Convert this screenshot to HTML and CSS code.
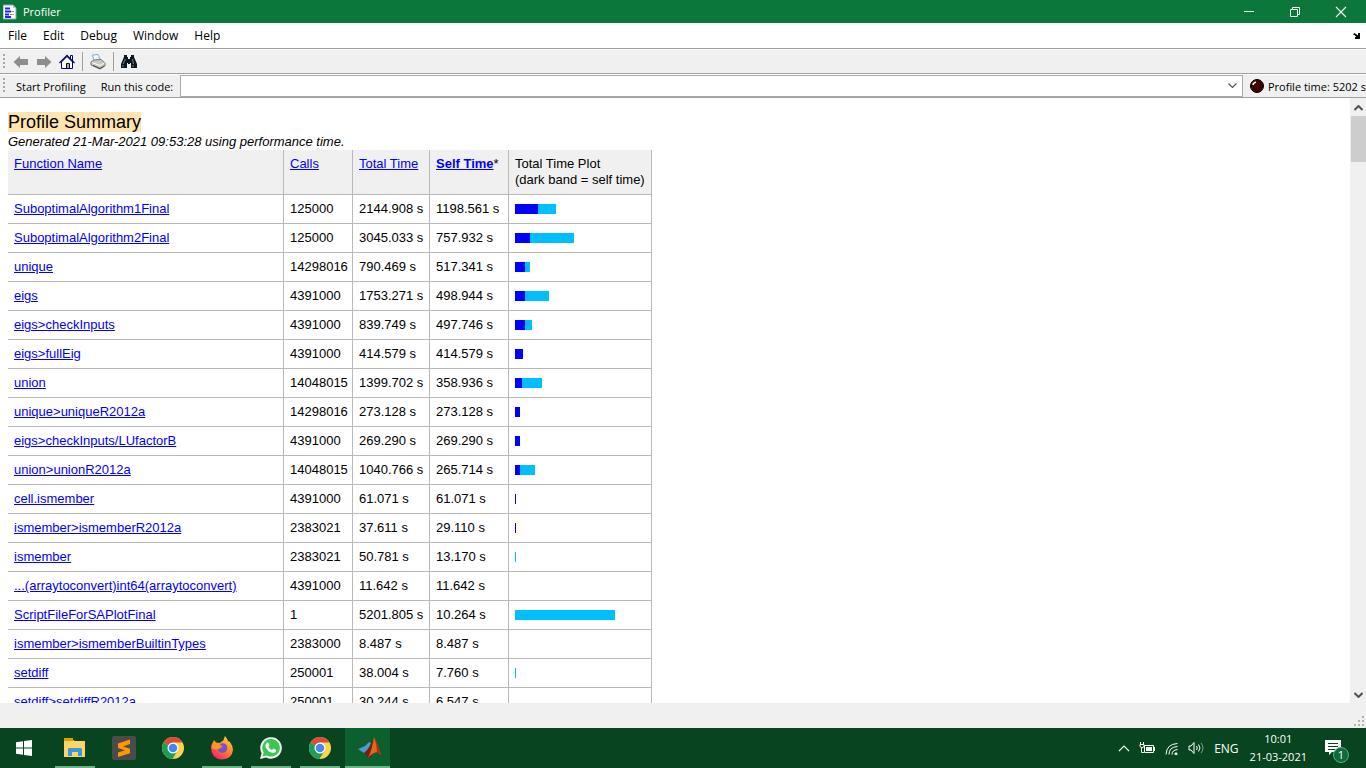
FILE: index.html
```html
<!DOCTYPE html>
<html lang="en">
<head>
<meta charset="utf-8">
<title>Profiler</title>
<link rel="stylesheet" href="styles.css">
</head>
<body>
<div class="screen">
  <header class="titlebar">
    <svg class="app-icon" width="14" height="16" viewBox="0 0 14 16"><path d="M0 1h10l3 3v11H0z" fill="#fff" stroke="#8c9cc8"/><path d="M2 4.500h5M2 7.500h6M2 10.500h4M2 13h6" stroke="#1a2be0" stroke-width="1.800"/><path d="M8 7.500h3M7 10.500h4" stroke="#9a9a9a"/><path d="M10 1v3h3" fill="#b9c6ea"/></svg>
    <h1 class="title">Profiler</h1>
    <div class="window-buttons">
      <button aria-label="Minimize"><svg width="12" height="12" viewBox="0 0 12 12"><path d="M1 5.500h10" stroke="#fff"/></svg></button>
      <button aria-label="Restore"><svg width="12" height="12" viewBox="0 0 12 12" fill="none" stroke="#fff"><path d="M1.500 3.500h7v7h-7zM3.500 3.500v-2h7v7h-2"/></svg></button>
      <button aria-label="Close"><svg width="12" height="12" viewBox="0 0 12 12"><path d="M1 1l10 10M11 1L1 11" stroke="#fff" stroke-width="1.100"/></svg></button>
    </div>
  </header>
  <nav class="menubar">
    <button>File</button><button>Edit</button><button>Debug</button><button>Window</button><button>Help</button>
    <svg class="dock" width="8" height="6" viewBox="0 0 8 6"><path d="M0 1.500L1.500 0 5 2.500V0h2v6H2V4h1.500L1.500 2z" fill="#000"/></svg>
  </nav>
  <div class="toolbar">
    <span class="grip"></span>
    <button aria-label="Back"><svg width="16" height="14" viewBox="0 0 16 14"><path d="M0.500 7L7 1v3h8v6H7v3z" fill="#8d8d8d"/></svg></button>
    <button aria-label="Forward"><svg width="16" height="14" viewBox="0 0 16 14"><path d="M15.500 7L9 1v3H1v6h8v3z" fill="#8d8d8d"/></svg></button>
    <button aria-label="Home"><svg width="16" height="16" viewBox="0 0 16 16"><path d="M2.500 8L8 2.500 13.500 8v6.500h-11z" fill="#fff" stroke="#00007c"/><path d="M11.500 5V1.500h2V8" fill="#fff" stroke="#00007c"/><path d="M.5 9L8 1.500 15.500 9" fill="none" stroke="#00007c" stroke-width="1.300"/><path d="M7.500 14V9.500h3V14" fill="#c8a860" stroke="#00007c"/></svg></button>
    <span class="divider"></span>
    <button aria-label="Print"><svg width="16" height="16" viewBox="0 0 16 16"><path d="M4 7L2.500 1 8 .5l3 6.500z" fill="#f4f9ff" stroke="#89a8d0"/><path d="M1 8l3-2 7-.5 4 3.500v3l-5 3-9-4z" fill="#c9c9c4" stroke="#777"/><path d="M2 8.500l8 3 4.500-2.500" fill="none" stroke="#fff"/><path d="M3 11.500l7 3 4-2.500" stroke="#444" fill="none"/><path d="M11 12h2" stroke="#e5c02b"/></svg></button>
    <span class="divider"></span>
    <button aria-label="Find"><svg width="16" height="14" viewBox="0 0 16 14"><path d="M3 0h3v2h1v2h2V2h1V0h3v2l3 7v4h-6V8H9v1H7V8H6v5H0V9l3-7z" fill="#0b1620"/><path d="M4.500 4L2 9M11.500 4l1 5M2 10v2M12 10v2" stroke="#6d8a99" fill="none"/></svg></button>
  </div>
  <div class="runbar">
    <span class="grip"></span>
    <button class="start">Start Profiling</button>
    <label class="run-label" for="code">Run this code:</label>
    <div class="combo">
      <input id="code" type="text">
      <button aria-label="Show history"><svg width="9" height="6" viewBox="0 0 9 6"><path d="M.5.5l4 4 4-4" fill="none" stroke="#555" stroke-width="1.200"/></svg></button>
    </div>
    <svg class="led" width="14" height="14" viewBox="0 0 14 14"><circle cx="7" cy="7" r="6.500" fill="#400000" stroke="#000"/><path d="M3 6q0-2 3-3" fill="none" stroke="#fff" stroke-width="1.500"/></svg>
    <span class="elapsed">Profile time: 5202 s</span>
  </div>
  <div class="viewport">
    <main class="report">
      <h2 class="heading"><span>Profile Summary</span></h2>
      <p class="generated">Generated 21-Mar-2021 09:53:28 using performance time.</p>
      <table class="profile">
        <colgroup><col class="c-name"><col class="c-calls"><col class="c-total"><col class="c-self"><col class="c-plot"></colgroup>
        <thead><tr><th><a href="#">Function Name</a></th><th><a href="#">Calls</a></th><th><a href="#">Total Time</a></th><th><a href="#"><b>Self Time</b></a>*</th><th>Total Time Plot<br>(dark band = self time)</th></tr></thead>
        <tbody id="rows"></tbody>
      </table>
    </main>
    <div class="scrollbar">
      <svg width="9" height="6" viewBox="0 0 9 6"><path d="M.5 5l4-4 4 4" fill="none" stroke="#505050" stroke-width="2"/></svg>
      <span class="thumb"></span>
      <svg width="9" height="6" viewBox="0 0 9 6"><path d="M.5 1l4 4 4-4" fill="none" stroke="#505050" stroke-width="2"/></svg>
    </div>
  </div>
  <div class="statusbar"><svg width="12" height="12" viewBox="0 0 12 12" fill="#b8b4a2"><path d="M8 0h2v2H8zM4 4h2v2H4zM8 4h2v2H8zM0 8h2v2H0zM4 8h2v2H4zM8 8h2v2H8z"/></svg></div>
  <footer class="taskbar">
    <button class="task start-menu" aria-label="Start"><svg width="16" height="16" viewBox="0 0 16 16" fill="#fff"><path d="M0 2.300L7 1.300V7.500H0zM8 1.100L16 0v7.500H8zM0 8.500h7v6.200L0 13.700zM8 8.500h8V16l-8-1.100z"/></svg></button>
    <button class="task open" aria-label="File Explorer"><svg width="24" height="24" viewBox="0 0 24 24"><path d="M1 4h9l2 1h10v16H1z" fill="#fdd667"/><path d="M1 2h9v3H1z" fill="#e3a000"/><path d="M5 20v-7l1-1h12l1 1v7h-4v-4H9v4z" fill="#3d97dc"/></svg></button>
    <button class="task" aria-label="Sublime Text"><svg width="24" height="24" viewBox="0 0 24 24"><rect width="24" height="24" rx="2" fill="#4b4b4b"/><path d="M18 3.500v4.500l-7 2.500 7 2.200v4.500L6 21v-4.500l7-2.300-7-2.200V7.500z" fill="#ff9800"/></svg></button>
    <button class="task" aria-label="Chrome"><svg width="24" height="24" viewBox="0 0 24 24"><circle cx="12" cy="12" r="11" fill="#fdd34c"/><path d="M12 12L2.500 6.500A11 11 0 0 1 21.500 6.500H12z" fill="#dc4a3d"/><path d="M2.500 6.500A11 11 0 0 0 11.500 23l5-8.300L12 12z" fill="#1f9d58"/><circle cx="12" cy="12" r="5.500" fill="#fff"/><circle cx="12" cy="12" r="4.300" fill="#4688f1"/></svg></button>
    <button class="task open" aria-label="Firefox"><svg width="24" height="24" viewBox="0 0 24 24"><defs><linearGradient id="fox" x1="1" y1="0" x2="0.300" y2="1"><stop offset="0" stop-color="#ffe23c"/><stop offset="0.500" stop-color="#ff8a28"/><stop offset="1" stop-color="#f5246a"/></linearGradient></defs><path d="M1 10L4 4l2 2.500L10 7q1-2 3-2l2-5q2 2 3 5l2 1q3 4 3 8-1 9-11 9.500Q1 23 1 10z" fill="url(#fox)"/><circle cx="12.500" cy="12" r="4.800" fill="#7750cf"/><path d="M2 9l2-4 2.500 2L11 7l-1 2.500 3 .5-3 2.500-4 1-4-1z" fill="#ff951f"/></svg></button>
    <button class="task open" aria-label="WhatsApp"><svg width="24" height="24" viewBox="0 0 24 24"><path d="M1 23l1.600-5.800A10.800 10.800 0 1 1 7 21.500z" fill="#f4f4f4"/><path d="M3.500 20.500l1.200-4A8.800 8.800 0 1 1 8 19.500z" fill="#3bc653"/><path d="M8 6.500l1.500.3 1 2.500-1.200 1.500q1.500 2.500 3.800 3.300l1.400-1.500 2.700 1.300q0 3-3.200 3-5-.7-7.500-6Q6 8 8 6.500z" fill="#fff"/></svg></button>
    <button class="task open" aria-label="Chrome window"><svg width="24" height="24" viewBox="0 0 24 24"><circle cx="12" cy="12" r="11" fill="#fdd34c"/><path d="M12 12L2.500 6.500A11 11 0 0 1 21.500 6.500H12z" fill="#dc4a3d"/><path d="M2.500 6.500A11 11 0 0 0 11.500 23l5-8.300L12 12z" fill="#1f9d58"/><circle cx="12" cy="12" r="5.500" fill="#fff"/><circle cx="12" cy="12" r="4.300" fill="#4688f1"/></svg></button>
    <button class="task open active" aria-label="MATLAB"><svg width="24" height="24" viewBox="0 0 24 24"><path d="M0 13l7-3 4-4 2 1-4 9-3 1z" fill="#4a9bd0"/><path d="M6 17q6-5 10-15l-2 19-4 1q-1-4-4-5z" fill="#7d1c0f"/><path d="M10 22Q14 14 16 1q3 6 7 18l-4-3q-5 1-9 6z" fill="#e8641b"/><path d="M16 1q3 6 7 18l-4-3q0-7-3-15z" fill="#b52c12"/></svg></button>
    <div class="tray">
      <svg width="12" height="7" viewBox="0 0 12 7"><path d="M1 6l5-5 5 5" fill="none" stroke="#fff" stroke-width="1.200"/></svg>
      <svg width="17" height="12" viewBox="0 0 17 12"><path d="M5.500 3.500h9v7h-9zM2.500 6v4.500H5M1 2.500h4v2L3 6 1 4.500zM1.500 0v2M4.500 0v2M15.500 5v4" fill="none" stroke="#fff"/><path d="M7 5h6v4H7z" fill="#fff"/></svg>
      <svg width="14" height="13" viewBox="0 0 14 13" fill="none" stroke="#fff"><path d="M1 12.500Q1.500 2 12.500 1.500M4 12.500Q4 5 12.500 4.500M7 12.500Q7 8 12.500 7.500"/><path d="M10 11h2v1.500h-2z" fill="#fff"/></svg>
      <svg width="17" height="14" viewBox="0 0 17 14" fill="none" stroke="#fff"><path d="M1 5h2l3-3.500v11L3 9H1zM8.500 5q1.500 2 0 4M10.500 3.500q3 3.500 0 7"/><path d="M13 2q4 5 0 10" opacity=".5"/></svg>
      <span class="lang">ENG</span>
      <div class="clock"><time>10:01</time><time>21-03-2021</time></div>
      <div class="notify"><svg width="17" height="16" viewBox="0 0 17 16"><path d="M0 0h16v12H7l-3 3v-3H0z" fill="#fff"/><path d="M3 3.500h10M3 6.500h10M3 9.500h7" stroke="#07421f"/></svg><span class="badge">1</span></div>
    </div>
  </footer>
</div>
<script src="rows.js"></script>
</body>
</html>
```
FILE: styles.css
```css
* { box-sizing: border-box; }
body { margin: 0; font-family: "Open Sans", "Noto Sans", sans-serif; font-size: 11px; color: #000; }
button { border: 0; padding: 0; background: none; font: inherit; color: inherit; }
svg { display: block; flex: none; }
.screen { display: flex; flex-direction: column; height: 100vh; background: #f0f0f0; overflow: hidden; }
.titlebar { display: flex; align-items: center; flex: none; height: 23px; padding-left: 3px; background: #0c773a; color: #fff; }
.title { flex: 1; margin: 0 0 0 6px; font-size: 11px; font-weight: 400; }
.window-buttons { display: flex; padding-right: 2px; }
.window-buttons button { display: grid; place-items: center; width: 46px; height: 22px; }
.menubar { display: flex; align-items: center; flex: none; gap: 16px; height: 26px; padding: 0 5px 0 8px; background: #fff; border-bottom: 1px solid #a0a0a0; font-size: 12px; }
.dock { margin-left: auto; }
.toolbar { display: flex; align-items: center; flex: none; height: 25px; border-top: 1px solid #fff; border-bottom: 1px solid #a0a0a0; }
.toolbar button { display: grid; place-items: center; width: 23px; height: 22px; }
.toolbar .divider { width: 1px; height: 19px; margin: 0 3px 0 4px; background: #a0a0a0; }
.grip { width: 2px; height: 16px; margin: 0 4px 0 3px; background: repeating-linear-gradient(#a8a8a8 0 2px, transparent 2px 4px); }
.runbar { display: flex; align-items: center; flex: none; height: 24px; border-top: 1px solid #fff; border-bottom: 1px solid #a0a0a0; white-space: nowrap; }
.runbar .grip { margin-right: 11px; }
.run-label { margin: 0 7px 0 15px; }
.combo { display: flex; flex: 1; height: 22px; border: 1px solid #a9a9ae; background: #fff; }
.combo input { flex: 1; min-width: 0; border: 0; outline: 0; }
.combo button { display: grid; place-items: center; width: 18px; }
.led { margin: 0 4px 0 7px; }
.viewport { display: flex; flex: 1; min-height: 0; background: #fff; }
.report { flex: 1; overflow: hidden; padding: 14px 8px 0; font-family: "Liberation Sans", Arial, sans-serif; font-size: 13px; line-height: 16px; }
.heading { margin: 0; font-size: 18px; font-weight: 400; line-height: 20px; }
.heading span { background: #ffe4b0; display: inline-block; }
.generated { margin: 2px 0 0; font-style: italic; }
.profile { border-spacing: 0; table-layout: fixed; width: 644px; }
.c-name { width: 276px; }
.c-calls { width: 69px; }
.c-total { width: 77px; }
.c-self { width: 79px; }
.c-plot { width: 143px; }
.profile th, .profile td { padding: 6px; border-right: 1px solid #b9b9b9; border-bottom: 1px solid #b9b9b9; text-align: left; vertical-align: top; white-space: nowrap; font-weight: 400; }
.profile th { height: 45px; background: #f0f0f0; }
.profile a { color: #00f; }
.bar { display: flex; height: 10px; margin-top: 3px; }
.bar .self { background: #00f; }
.bar .rest { background: #00bfff; }
.scrollbar { display: flex; flex-direction: column; align-items: center; justify-content: space-between; width: 16px; padding: 7px 0 5px; background: #f0f0f0; }
.thumb { width: 15px; height: 46px; margin: 5px 0 auto; background: #cdcdcd; }
.statusbar { display: flex; align-items: flex-end; justify-content: flex-end; flex: none; height: 25px; }
.taskbar { display: flex; flex: none; height: 40px; background: #07441f; color: #fff; }
.task { display: grid; place-items: center; width: 49px; padding: 0 4px 0 5px; background-clip: content-box; }
.start-menu { padding: 0 6px 0 5px; margin-right: 1px; }
.open { background: linear-gradient(#6fb187, #6fb187) bottom / 100% 2px no-repeat content-box; }
.active { width: 45px; margin-left: 1px; padding: 0; background: linear-gradient(#6fb187, #6fb187) bottom / 100% 2px no-repeat, #0c602e; }
.active svg { margin-left: 4px; }
.tray { display: flex; align-items: center; margin-left: auto; gap: 9px; padding-right: 24px; }
.lang { font-size: 12px; }
.clock { display: flex; flex-direction: column; align-items: center; margin-left: 2px; line-height: 18px; }
.notify { position: relative; margin-left: 9px; }
.badge { position: absolute; left: 8px; top: 7px; width: 16px; height: 16px; border: 1px solid #66a77e; border-radius: 50%; background: #0b6b3d; font-size: 11px; line-height: 14px; text-align: center; }
```
FILE: rows.js
```js
// name, calls, total seconds, self seconds, dark band width, light band width
const rows = [
  ["SuboptimalAlgorithm1Final", 125000, "2144.908", "1198.561", 23, 18],
  ["SuboptimalAlgorithm2Final", 125000, "3045.033", "757.932", 15, 44],
  ["unique", 14298016, "790.469", "517.341", 10, 5],
  ["eigs", 4391000, "1753.271", "498.944", 10, 24],
  ["eigs>checkInputs", 4391000, "839.749", "497.746", 10, 7],
  ["eigs>fullEig", 4391000, "414.579", "414.579", 8, 0],
  ["union", 14048015, "1399.702", "358.936", 7, 20],
  ["unique>uniqueR2012a", 14298016, "273.128", "273.128", 5, 0],
  ["eigs>checkInputs/LUfactorB", 4391000, "269.290", "269.290", 5, 0],
  ["union>unionR2012a", 14048015, "1040.766", "265.714", 5, 15],
  ["cell.ismember", 4391000, "61.071", "61.071", 1, 0],
  ["ismember>ismemberR2012a", 2383021, "37.611", "29.110", 1, 0],
  ["ismember", 2383021, "50.781", "13.170", 0, 1],
  ["...(arraytoconvert)int64(arraytoconvert)", 4391000, "11.642", "11.642", 0, 0],
  ["ScriptFileForSAPlotFinal", 1, "5201.805", "10.264", 0, 100],
  ["ismember>ismemberBuiltinTypes", 2383000, "8.487", "8.487", 0, 0],
  ["setdiff", 250001, "38.004", "7.760", 0, 1],
  ["setdiff>setdiffR2012a", 250001, "30.244", "6.547", 0, 0]
];
document.getElementById("rows").innerHTML = rows.map(([name, calls, total, self, dark, light]) =>
  `<tr><td><a href="#">${name.replace(">", "&gt;")}</a></td><td>${calls}</td><td>${total} s</td><td>${self} s</td>` +
  `<td><div class="bar"><span class="self" style="width:${dark}px"></span><span class="rest" style="width:${light}px"></span></div></td></tr>`
).join("");
```
